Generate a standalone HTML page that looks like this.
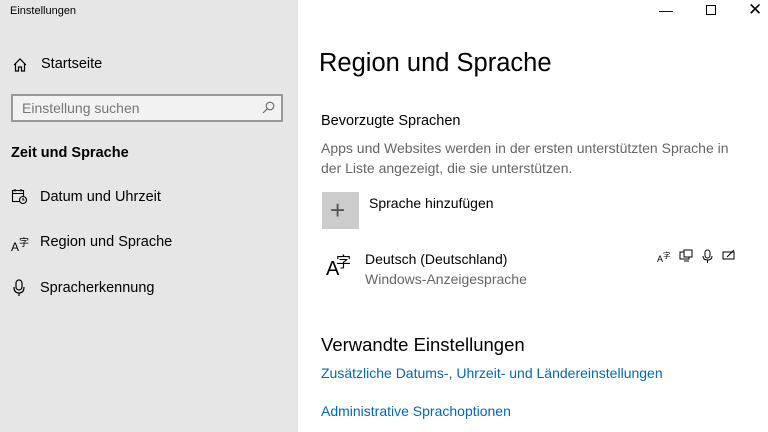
<!DOCTYPE html>
<html><head><meta charset="utf-8"><style>
*{margin:0;padding:0;box-sizing:border-box}
body{width:768px;height:432px;overflow:hidden;font-family:"Liberation Sans","Noto Sans CJK SC",sans-serif;background:#fff;position:relative;color:#000}
.side{position:absolute;left:0;top:0;width:298px;height:432px;background:#e6e6e6}
.t{position:absolute;white-space:nowrap}
.ic{position:absolute}
</style></head><body>
<div class="side">
<div class="t" style="left:10px;top:5px;font-size:11px">Einstellungen</div>
<svg class="ic" style="left:12px;top:57px" width="16" height="16" viewBox="0 0 16 16" fill="none" stroke="#000" stroke-width="1.2"><path d="M2 8 L8 2 L14 8 M3.5 6.5 V14 H6.5 V10 H9.5 V14 H12.5 V6.5"/></svg>
<div class="t" style="left:41px;top:56px;font-size:14.5px">Startseite</div>
<div style="position:absolute;left:11px;top:94px;width:272px;height:28px;border:2px solid #999;background:#f2f2f2"></div>
<div class="t" style="left:22px;top:100px;font-size:14px;color:#777">Einstellung suchen</div>
<svg class="ic" style="left:262px;top:101px" width="13" height="13" viewBox="0 0 13 13" fill="none" stroke="#666" stroke-width="1.1"><circle cx="8" cy="5" r="3.8"/><path d="M5.3 7.7 L1 12"/></svg>
<div class="t" style="left:11px;top:145px;font-size:14.5px;font-weight:bold">Zeit und Sprache</div>
<svg class="ic" style="left:11px;top:188px" width="17" height="17" viewBox="0 0 17 17" fill="none" stroke="#000" stroke-width="1.1"><rect x="1.5" y="2.5" width="11" height="11"/><path d="M1.5 5.5 H12.5 M4 1 V3.5 M10 1 V3.5"/><circle cx="12" cy="12" r="3.5" fill="#e6e6e6"/><path d="M12 10 V12 H13.5"/></svg>
<div class="t" style="left:40px;top:189px;font-size:14.5px">Datum und Uhrzeit</div>
<div class="t" style="left:11px;top:234px;font-size:12px">A<sup style="font-size:10px">字</sup></div>
<div class="t" style="left:40px;top:234px;font-size:14.5px">Region und Sprache</div>
<svg class="ic" style="left:12px;top:279px" width="14" height="18" viewBox="0 0 14 18" fill="none" stroke="#000" stroke-width="1.2"><rect x="4" y="1" width="6" height="10" rx="3"/><path d="M2 8 Q2 14 7 14 Q12 14 12 8 M7 14 V17"/></svg>
<div class="t" style="left:40px;top:280px;font-size:14.5px">Spracherkennung</div>
</div>
<div class="t" style="left:659px;top:2px;font-size:14px">&#8212;</div>
<div style="position:absolute;left:706px;top:5px;width:10px;height:10px;border:1px solid #000"></div>
<div class="t" style="left:748px;top:0px;font-size:17px">✕</div>
<div class="t" style="left:319px;top:49px;font-size:25.5px">Region und Sprache</div>
<div class="t" style="left:321px;top:113px;font-size:14.5px">Bevorzugte Sprachen</div>
<div class="t" style="left:321px;top:138px;font-size:14px;color:#666;line-height:20px">Apps und Websites werden in der ersten unterstützten Sprache in<br>der Liste angezeigt, die sie unterstützen.</div>
<div style="position:absolute;left:322px;top:192px;width:37px;height:37px;background:#ccc"></div>
<div class="t" style="left:330px;top:195px;font-size:26px;color:#555;font-weight:200">+</div>
<div class="t" style="left:369px;top:195px;font-size:14px">Sprache hinzufügen</div>
<div class="t" style="left:326px;top:258px;font-size:20px">A</div>
<div class="t" style="left:336px;top:251px;font-size:15px">字</div>
<div class="t" style="left:365px;top:251px;font-size:14px">Deutsch (Deutschland)</div>
<div class="t" style="left:365px;top:271px;font-size:14px;color:#666">Windows-Anzeigesprache</div>
<div class="t" style="left:657px;top:250px;font-size:9px">A<sup>字</sup></div>
<svg class="ic" style="left:679px;top:249px" width="14" height="14" viewBox="0 0 14 14" fill="none" stroke="#000" stroke-width="1"><rect x="1" y="3" width="9" height="7"/><rect x="5" y="1" width="8" height="7" fill="#fff"/><path d="M5 12 H10"/></svg>
<svg class="ic" style="left:702px;top:249px" width="11" height="15" viewBox="0 0 11 15" fill="none" stroke="#000" stroke-width="1"><rect x="3" y="1" width="5" height="8" rx="2.5"/><path d="M1 7 Q1 11 5.5 11 Q10 11 10 7 M5.5 11 V14"/></svg>
<svg class="ic" style="left:722px;top:249px" width="14" height="12" viewBox="0 0 14 12" fill="none" stroke="#000" stroke-width="1"><rect x="1" y="3" width="11" height="7"/><path d="M5 8 L12 1"/></svg>
<div class="t" style="left:321px;top:334px;font-size:18.5px">Verwandte Einstellungen</div>
<div class="t" style="left:321px;top:365px;font-size:14px;color:#0067c0">Zusätzliche Datums-, Uhrzeit- und Ländereinstellungen</div>
<div class="t" style="left:321px;top:403px;font-size:14px;color:#0067c0">Administrative Sprachoptionen</div>
</body></html>
